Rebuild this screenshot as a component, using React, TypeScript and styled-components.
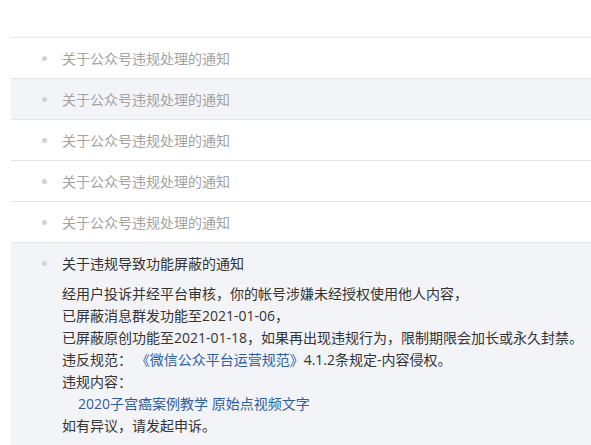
import React, { useState } from "react";
import styled, { createGlobalStyle } from "styled-components";

const GlobalStyle = createGlobalStyle`
  html, body {
    margin: 0;
    padding: 0;
    background: #fff;
  }
  body {
    font-family: "Open Sans", "Noto Sans CJK SC", sans-serif;
    font-size: 14px;
  }
`;

const Page = styled.div`
  padding-top: 37px;
  padding-left: 11px;
`;

const List = styled.ul`
  list-style: none;
  margin: 0;
  padding: 0;
  border-top: 1px solid #e5e5e8;
`;

const Item = styled.li<{ active: boolean }>`
  border-bottom: 1px solid #e5e5e8;
  background: ${({ active }) => (active ? "#f3f4f8" : "#fff")};
  &:last-child {
    border-bottom: none;
  }
`;

const Header = styled.div<{ open: boolean }>`
  height: 40px;
  display: flex;
  align-items: center;
  padding-left: 31px;
  color: ${({ open }) => (open ? "#333" : "#a3a3a3")};
  cursor: pointer;
`;

const Dot = styled.span`
  width: 5px;
  height: 5px;
  border-radius: 50%;
  background: #d3d3d6;
  margin-right: 15px;
  flex-shrink: 0;
`;

const Body = styled.div`
  padding: 0 0 9px 51px;
  line-height: 22px;
  color: #333;
`;

const Line = styled.div<{ indent?: boolean }>`
  padding-left: ${({ indent }) => (indent ? "16px" : "0")};
  white-space: nowrap;
`;

const Link = styled.span`
  color: #2b5fa8;
`;

const items = [
  "关于公众号违规处理的通知",
  "关于公众号违规处理的通知",
  "关于公众号违规处理的通知",
  "关于公众号违规处理的通知",
  "关于公众号违规处理的通知",
  "关于违规导致功能屏蔽的通知",
];

const App: React.FC = () => {
  const [open, setOpen] = useState<number>(5);
  const hover = 1;

  return (
    <Page>
      <GlobalStyle />
      <List>
        {items.map((title, i) => (
          <Item key={i} active={i === open || i === hover}>
            <Header open={i === open} onClick={() => setOpen(i)}>
              <Dot />
              {title}
            </Header>
            {i === open && (
              <Body>
                <Line>经用户投诉并经平台审核，你的帐号涉嫌未经授权使用他人内容，</Line>
                <Line>已屏蔽消息群发功能至2021-01-06，</Line>
                <Line>已屏蔽原创功能至2021-01-18，如果再出现违规行为，限制期限会加长或永久封禁。</Line>
                <Line>
                  违反规范：&nbsp;<Link>《微信公众平台运营规范》</Link>4.1.2条规定-内容侵权。
                </Line>
                <Line>违规内容：</Line>
                <Line indent>
                  <Link>2020子宫癌案例教学 原始点视频文字</Link>
                </Line>
                <Line>如有异议，请发起申诉。</Line>
              </Body>
            )}
          </Item>
        ))}
      </List>
    </Page>
  );
};

export default App;
